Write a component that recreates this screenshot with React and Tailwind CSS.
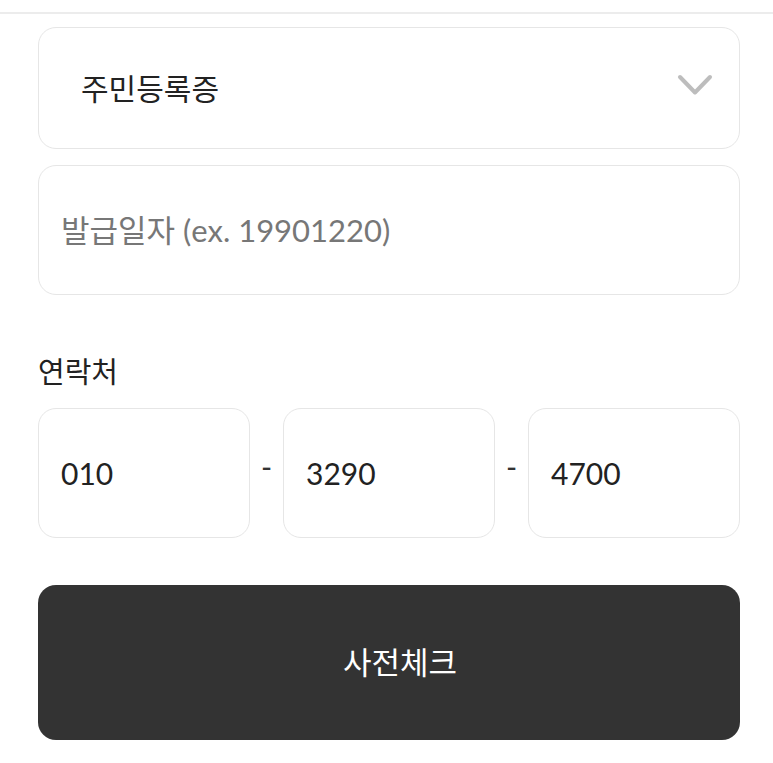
const FONT = "font-['Lato','Noto_Sans_CJK_KR',sans-serif]";

function Chevron() {
  return (
    <svg width="36" height="22" viewBox="0 0 36 22" fill="none" aria-hidden="true" className="-translate-y-[3px]">
      <path d="M3 3 L18 18.5 L33 3" stroke="#bdbdbd" strokeWidth="4" strokeLinecap="round" strokeLinejoin="round" />
    </svg>
  );
}

function PhoneBox({ value }) {
  return (
    <div className="flex h-[130px] flex-1 items-center rounded-[18px] border border-[#e6e6e6] bg-white pl-[22px] text-[30px] text-[#222]">
      {value}
    </div>
  );
}

function Dash() {
  return <div className="flex w-[33px] -translate-y-[7px] items-center justify-center text-[30px] text-[#333]">-</div>;
}

export default function App() {
  return (
    <div className={`min-h-screen bg-white ${FONT}`}>
      <div className="h-[14px] border-b-2 border-[#ececec]" />

      <div className="pl-[38px] pr-[33px] pt-[13px]">
        <div className="flex h-[122px] items-center justify-between rounded-[18px] border border-[#e6e6e6] pl-[42px] pr-[26px]">
          <span className="text-[30px] text-[#222]">주민등록증</span>
          <Chevron />
        </div>

        <div className="mt-[16px] flex h-[130px] items-center rounded-[18px] border border-[#e6e6e6] pl-[22px]">
          <span className="text-[31px] text-[#777]">발급일자 (ex. 19901220)</span>
        </div>

        <p className="mt-[57px] text-[29px] leading-[40px] text-[#222]">연락처</p>

        <div className="mt-[16px] flex">
          <PhoneBox value="010" />
          <Dash />
          <PhoneBox value="3290" />
          <Dash />
          <PhoneBox value="4700" />
        </div>

        <button
          type="button"
          className="mt-[47px] flex h-[155px] w-full items-center justify-center rounded-[18px] bg-[#333333] pl-[22px] text-[31px] text-white"
        >
          사전체크
        </button>
      </div>
    </div>
  );
}
